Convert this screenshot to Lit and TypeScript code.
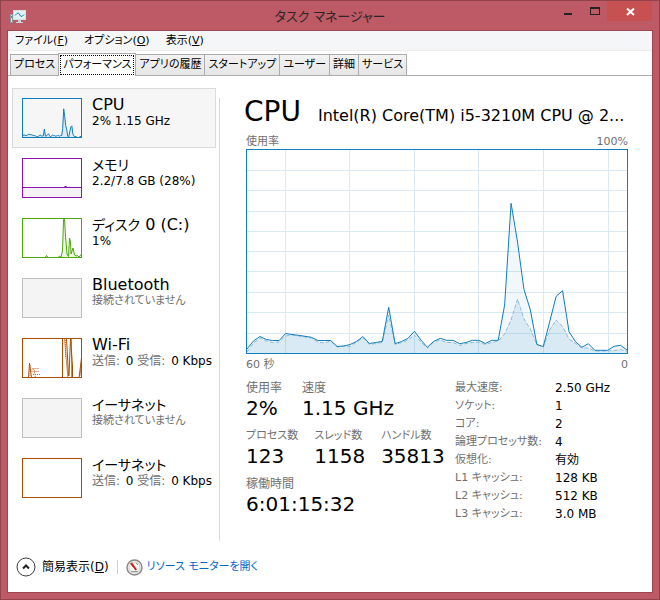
import { LitElement, html, svg, css, nothing } from "lit";
import { customElement, property } from "lit/decorators.js";
import { classMap } from "lit/directives/class-map.js";

const TOTAL = [
  4, 12, 16.5, 13.5, 12.5, 12.5, 19.5, 18.5, 17.7, 16.7, 15.7, 12.5, 12.5, 12.5, 6.5, 7, 8.5, 11.5, 16.5, 9.5,
  10.5, 11.5, 45.7, 9.3, 11.5, 14.7, 21.7, 13, 5.7, 11.7, 14.7, 12.7, 12.7, 9.3, 10.5, 12.7, 12.7, 9.5, 12.7, 12.7,
  48, 149.7, 111, 63.7, 43, 8.5, 6.5, 31.3, 56.7, 62.3, 21.3, 11.3, 5.7, 9.3, 2.7, 2.7, 2.7, 6.7, 7.7, 3,
];
const KERNEL = [
  1, 10, 15, 12, 10.5, 11, 17, 18, 17, 16, 15, 11, 10, 12, 6, 7, 6.5, 11, 15, 8.5,
  9.5, 10.5, 38, 8.5, 10.5, 13, 18, 11, 5, 11, 13, 10.5, 10.5, 7.5, 9.5, 10.5, 11, 8.5, 10.5, 12,
  19, 33, 54, 34, 24, 8.5, 6, 23, 33, 26.5, 14, 9.5, 5, 5, 2, 2, 2, 2.5, 3.5, 2,
];

function trace(values: number[], w: number, h: number, full: number): string {
  return values
    .map((v, i) => `${((i * w) / (values.length - 1)).toFixed(2)},${(h - (v * h) / full).toFixed(2)}`)
    .join(" ");
}

interface Item {
  kana?: string;
  name?: string;
  kind: string;
  detail?: string;
  idle?: boolean;
  net?: boolean;
}

const ITEMS: Item[] = [
  { name: "CPU", kind: "cpu", detail: "2% 1.15 GHz" },
  { kana: "メモリ", kind: "memory", detail: "2.2/7.8 GB (28%)" },
  { kana: "ディスク", name: " 0 (C:)", kind: "disk", detail: "1%" },
  { name: "Bluetooth", kind: "off", idle: true },
  { name: "Wi-Fi", kind: "wifi", net: true },
  { kana: "イーサネット", kind: "off", idle: true },
  { kana: "イーサネット", kind: "ethernet", net: true },
];

const STATS = [
  [["使用率", "2%"], ["速度", "1.15 GHz"]],
  [["プロセス数", "123"], ["スレッド数", "1158"], ["ハンドル数", "35813"]],
  [["稼働時間", "6:01:15:32"]],
];

const SPECS = [
  ["最大速度:", "2.50 GHz"],
  ["ソケット:", "1"],
  ["コア:", "2"],
  ["論理プロセッサ数:", "4"],
  ["仮想化:", "有効"],
  ["L1 キャッシュ:", "128 KB"],
  ["L2 キャッシュ:", "512 KB"],
  ["L3 キャッシュ:", "3.0 MB"],
];

@customElement("spark-line")
export class SparkLine extends LitElement {
  @property() kind = "off";

  static styles = css`
    :host { display: block; width: 60px; height: 40px; flex: none; }
    svg { display: block; width: 100%; height: 100%; }
    .cpu { color: #117dbb; }
    .memory { color: #8b12ae; }
    .disk { color: #4da60c; }
    .wifi, .ethernet { color: #a74f01; }
    .off { color: #bfbfbf; }
    .frame { fill: none; stroke: currentColor; }
    .line { fill: none; stroke: currentColor; }
    .area { fill: currentColor; fill-opacity: 0.1; stroke: none; }
    .grey { fill: #f4f4f4; }
    .mem { fill: #f4f2f4; }
    .dot { fill: none; stroke: #d0622a; stroke-dasharray: 1 1; }
    .soft { fill: none; stroke: #c98a55; }
  `;

  private plot() {
    switch (this.kind) {
      case "cpu": {
        const p = trace(TOTAL, 60, 40, 205);
        return svg`<polygon class="area" points="0,40 ${p} 60,40"/><polyline class="line" points=${p}/>`;
      }
      case "memory":
        return svg`<rect class="mem" y="29" width="60" height="11"/>
          <path class="line" d="M0 29.5H60M42.5 28.5h2"/>`;
      case "disk": {
        const p = "0,39.5 23,39.5 24.5,37.5 26,39.5 36,39.5 37.5,38 39,39 40.5,33 41.5,2 42.5,0 43.5,18 45,36 46.5,38.5 47.5,20 48.5,24 49,36 51,30 52.5,37 54,38 55.5,37.5 57,39 58,37.5 60,36";
        return svg`<polygon class="area" points="0,40 ${p} 60,40"/><polyline class="line" points=${p}/>`;
      }
      case "wifi":
        return svg`<path class="soft" d="M42.5 0L44.5 24L46 40M49.5 0V40M58 38L59.5 24"/>
          <path class="line" d="M6.5 40L7.5 25L9.5 40M40.5 40V0M44.5 0L46.5 38M48.5 0L47 38M48.5 0L50.5 28V40M57 40L59.5 20"/>
          <path class="dot" d="M8 27V40M9.5 32L12 31L13.5 40M10.5 30.5H17M9.5 33.5H17.5M11 36.5H18.5M43.5 0V20"/>`;
      case "off":
        return svg`<rect class="grey" width="60" height="40"/>`;
      default:
        return nothing;
    }
  }

  render() {
    return html`<svg class=${this.kind} viewBox="0 0 60 40" aria-hidden="true">
      ${this.plot()}<rect class="frame" x="0.5" y="0.5" width="59" height="39" />
    </svg>`;
  }
}

@customElement("usage-chart")
export class UsageChart extends LitElement {
  static styles = css`
    :host { display: block; height: 205px; border: 1px solid #117dbb; box-sizing: border-box; }
    svg { display: block; width: 100%; height: 100%; }
    .grid { stroke: #d9eaf4; fill: none; }
    .total { fill: none; stroke: #117dbb; }
    .kernel { fill: none; stroke: #8dbbd8; stroke-dasharray: 4 2; }
    .shade { fill: #117dbb; fill-opacity: 0.06; }
    .deep { fill: #117dbb; fill-opacity: 0.1; }
    path, polyline { vector-effect: non-scaling-stroke; }
  `;

  render() {
    const rows = [20.5, 40.5, 61.5, 81.5, 101.5, 121.5, 142.5, 162.5, 183.5].map((y) => `M0 ${y}H380`);
    const cols = [38.5, 102.5, 167.5, 231.5, 296.5, 361.5].map((x) => `M${x} 0V203`);
    const total = trace(TOTAL, 380, 203, 203);
    const kernel = trace(KERNEL, 380, 203, 203);
    return html`<svg viewBox="0 0 380 203" preserveAspectRatio="none" role="img" aria-label="CPU 使用率">
      <path class="grid" d=${[...rows, ...cols].join("")} />
      <polygon class="shade" points="0,203 ${total} 380,203" />
      <polygon class="deep" points="0,203 ${kernel} 380,203" />
      <polyline class="kernel" points=${kernel} />
      <polyline class="total" points=${total} />
    </svg>`;
  }
}

@customElement("app-root")
export class AppRoot extends LitElement {
  static styles = css`
    :host {
      display: flex;
      flex-direction: column;
      box-sizing: border-box;
      min-height: 100vh;
      padding: 0 7px 7px;
      border: 1px solid #90434b;
      background: #bd5a65;
      font: 12px/16px "DejaVu Sans", "Noto Sans CJK JP", sans-serif;
      font-feature-settings: "palt";
      color: #000;
    }
    * { box-sizing: border-box; }
    button {
      font: inherit;
      font-feature-settings: inherit;
      color: inherit;
      background: none;
      border: 0;
      padding: 0;
      margin: 0;
      text-align: left;
    }
    .title {
      display: grid;
      grid-template-columns: 1fr auto 1fr;
      height: 29px;
    }
    .logo { display: block; margin: 7px 0 0 1px; }
    h1 { margin: 4px 0 0; font-size: 13px; line-height: 24px; font-weight: 400; color: #2c2628; }
    .caption { display: flex; justify-content: flex-end; align-items: flex-start; }
    .caption button { width: 27px; height: 20px; }
    .caption .close { width: 45px; background: #c75050; }
    .caption svg { display: block; }
    .body {
      flex: 1;
      display: flex;
      flex-direction: column;
      background: #fff;
      outline: 1px solid #9c4650;
      margin: 1px 0 0;
    }
    .menu {
      display: flex;
      gap: 16px;
      height: 20px;
      padding: 0 7px;
      background: #f5f6f7;
      border-bottom: 1px solid #ebebeb;
      font-size: 11px;
    }
    .menu button { line-height: 19px; }
    .tabs {
      display: flex;
      align-items: flex-end;
      height: 25px;
      padding: 0 2px;
      border-bottom: 1px solid #acacac;
    }
    .tab {
      height: 21px;
      padding: 0 3px;
      margin-left: -1px;
      border: 1px solid #acacac;
      border-bottom: 0;
      background: linear-gradient(#f2f2f2, #e6e6e6);
      white-space: nowrap;
      font-size: 11px;
    }
    .tab:first-child { margin-left: 0; }
    .tab.on { height: 23px; margin-bottom: -1px; padding: 1px; background: #fff; }
    .tab.on span { display: block; line-height: 18px; height: 20px; padding: 0 2px; border: 1px dotted #000; }
    .main { flex: 1; display: flex; padding: 12px 24px 0 4px; }
    aside { width: 204px; flex: none; }
    .item {
      display: flex;
      gap: 10px;
      width: 100%;
      height: 60px;
      padding: 9px;
      border: 1px solid transparent;
      white-space: nowrap;
    }
    .item.on { background: #f6f6f6; border-color: #dadada; }
    .name { display: block; font-size: 16px; line-height: 16px; height: 16px; margin-top: -1px; white-space: pre; }
    .kana { font-size: 14px; }
    .detail { display: block; }
    .muted { color: #707070; }
    .way { margin-right: 2px; }
    .small { font-size: 11px; }
    .rule { width: 1px; flex: none; height: 443px; margin: 10px 26px 0 3px; background: #dadada; }
    .panel { flex: 1; min-width: 0; }
    .head { display: flex; align-items: baseline; gap: 17px; padding-top: 4px; margin-left: -2px; }
    h2 { margin: 0; font-size: 28px; line-height: 40px; font-weight: 400; }
    .model { font-size: 16px; white-space: nowrap; }
    .scale {
      display: flex;
      justify-content: space-between;
      padding-top: 3px;
      font-size: 11px;
      line-height: 14px;
      color: #707070;
    }
    .axis { padding-top: 4px; }
    .facts { display: flex; padding-top: 8px; }
    .stats { width: 209px; flex: none; }
    .row { display: flex; gap: 20px; height: 48px; margin: 0; white-space: nowrap; }
    .row.tight { gap: 16px; }
    dt { color: #707070; line-height: 16px; }
    .tight dt { font-size: 11px; }
    dd { margin: 0; font-size: 20px; line-height: 24px; }
    table { border-collapse: collapse; table-layout: fixed; white-space: nowrap; align-self: flex-start; }
    th, td { padding: 0; height: 18px; line-height: 16px; font-weight: 400; text-align: left; vertical-align: top; }
    th { width: 100px; color: #707070; font-size: 11px; }
    .foot { display: flex; align-items: center; gap: 8px; height: 50px; padding: 0 8px; }
    .fewer { display: flex; align-items: center; gap: 6px; white-space: nowrap; }
    .bar { width: 1px; height: 14px; background: #cfcfcf; }
    .link { display: flex; align-items: center; gap: 4px; font-size: 11px; color: #0066cc; text-decoration: none; }
    .foot svg { display: block; }
  `;

  private detail(it: Item) {
    if (it.idle) return html`<span class="detail muted small">接続されていません</span>`;
    if (it.net)
      return html`<span class="detail"><span class="muted way">送信: </span>0 <span class="muted way">受信: </span>0 Kbps</span>`;
    return html`<span class="detail">${it.detail}</span>`;
  }

  render() {
    return html`
      <header class="title">
        <svg class="logo" width="18" height="18" viewBox="0 0 18 18" aria-hidden="true">
          <rect x="1.5" y="6.5" width="2" height="8" fill="#d8e0e2" stroke="#8b9a9e" />
          <rect x="2" y="8" width="1" height="2" fill="#3fae49" />
          <rect x="4.5" y="2.500" width="12" height="9" fill="#dff2fa" stroke="#d5dfe2" />
          <path d="M6 7.500L8 5.500L9.500 5L12 8.500L13.500 8L15 6.500" fill="none" stroke="#1b83b8" />
          <path d="M9 12h3v2h2v1H7v-1h2z" fill="#cbd5d8" />
        </svg>
        <h1>タスク マネージャー</h1>
        <div class="caption">
          <button aria-label="最小化">
            <svg width="27" height="20"><rect x="11" y="12" width="8" height="2" fill="#222" /></svg>
          </button>
          <button aria-label="最大化">
            <svg width="27" height="20">
              <path d="M10 6h10v8H10zM11 8v5h8V8z" fill="#222" fill-rule="evenodd" />
            </svg>
          </button>
          <button class="close" aria-label="閉じる">
            <svg width="45" height="20">
              <path d="M20 7.500L27 14M27 7.500L20 14" stroke="#fff" stroke-width="2" />
            </svg>
          </button>
        </div>
      </header>
      <div class="body">
        <nav class="menu">
          <button>ファイル(<u>F</u>)</button>
          <button>オプション(<u>O</u>)</button>
          <button>表示(<u>V</u>)</button>
        </nav>
        <div class="tabs" role="tablist">
          ${["プロセス", "パフォーマンス", "アプリの履歴", "スタートアップ", "ユーザー", "詳細", "サービス"].map(
            (t, i) => html`<button role="tab" aria-selected=${i === 1} class=${classMap({ tab: true, on: i === 1 })}><span>${t}</span></button>`,
          )}
        </div>
        <div class="main">
          <aside>
            ${ITEMS.map(
              (it, i) => html`<button class=${classMap({ item: true, on: i === 0 })}>
                <spark-line kind=${it.kind}></spark-line>
                <span><span class="name">${it.kana ? html`<span class="kana">${it.kana}</span>` : nothing}${it.name}</span>${this.detail(it)}</span>
              </button>`,
            )}
          </aside>
          <div class="rule"></div>
          <section class="panel">
            <div class="head"><h2>CPU</h2><span class="model">Intel(R) Core(TM) i5-3210M CPU @ 2...</span></div>
            <div class="scale"><span>使用率</span><span>100%</span></div>
            <usage-chart></usage-chart>
            <div class="scale axis"><span>60 秒</span><span>0</span></div>
            <div class="facts">
              <div class="stats">
                ${STATS.map(
                  (r) => html`<dl class=${classMap({ row: true, tight: r.length > 2 })}>
                    ${r.map(([k, v]) => html`<div><dt>${k}</dt><dd>${v}</dd></div>`)}
                  </dl>`,
                )}
              </div>
              <table>
                <tbody>
                  ${SPECS.map(([k, v]) => html`<tr><th scope="row">${k}</th><td>${v}</td></tr>`)}
                </tbody>
              </table>
            </div>
          </section>
        </div>
        <footer class="foot">
          <button class="fewer">
            <svg width="20" height="20" viewBox="0 0 20 20" aria-hidden="true">
              <circle cx="10" cy="10" r="9" fill="#fff" stroke="#3c3c3c" />
              <path d="M7 11.500L10 8.500L13 11.500" fill="none" stroke="#222" stroke-width="2" />
            </svg>
            <span>簡易表示(<u>D</u>)</span>
          </button>
          <span class="bar"></span>
          <a class="link" href="#resmon">
            <svg width="17" height="17" viewBox="0 0 17 17" aria-hidden="true">
              <circle cx="8.500" cy="8.500" r="7.500" fill="#f4f4f2" stroke="#8a8a86" stroke-width="1.500" />
              <circle cx="8.500" cy="8.500" r="5.500" fill="#fbfbf8" stroke="#c9c9c2" />
              <path d="M4 4.500L6 3.500L11 10.500L9.500 11.500z" fill="#d01818" />
              <path d="M10 4l2 2M5 12.500h7" stroke="#9a9a94" />
            </svg>
            リソース モニターを開く
          </a>
        </footer>
      </div>
    `;
  }
}
